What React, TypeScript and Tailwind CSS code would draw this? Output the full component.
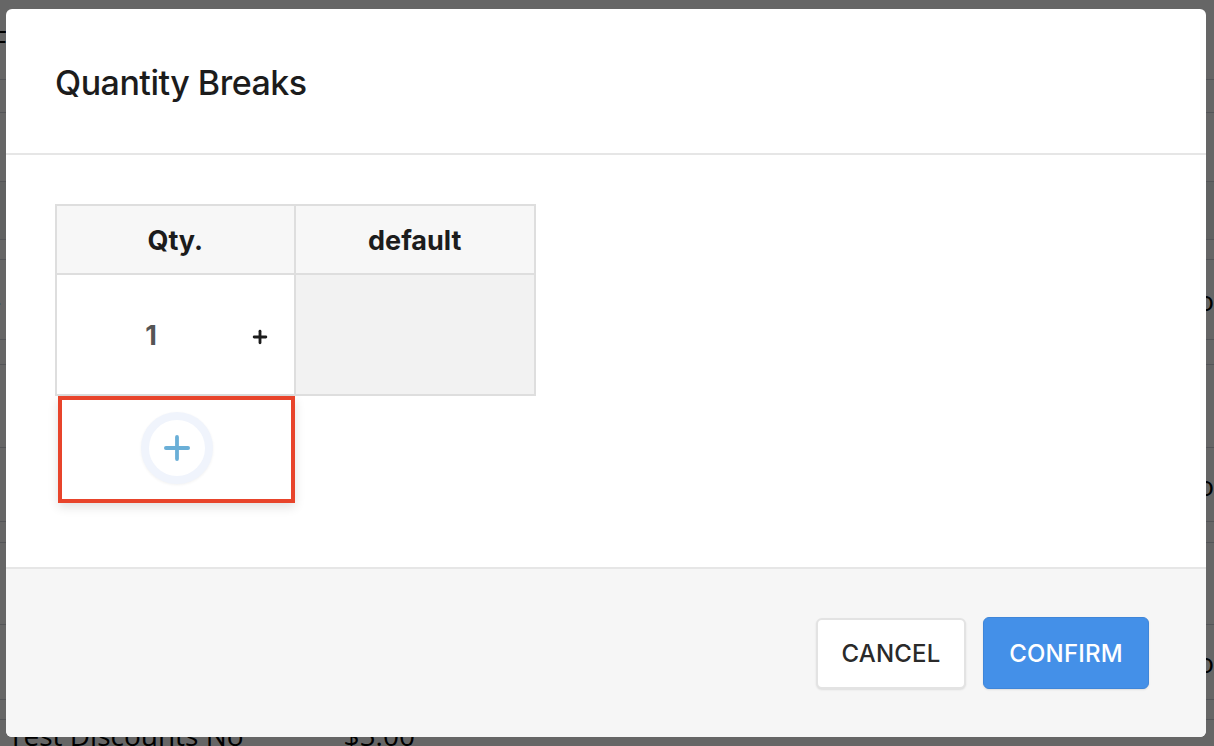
import { Plus } from 'lucide-react';

const bgRows = [
  { h: 'h-[80px]', left: 'F', right: '' },
  { h: 'h-[33px]', left: '', right: '' },
  { h: 'h-[69px]', left: '', right: '' },
  { h: 'h-[58px]', left: 'l', right: '', dark: true },
  { h: 'h-[20px]', left: '', right: '' },
  { h: 'h-[80px]', left: '-', right: 'lo' },
  { h: 'h-[25px]', left: '', right: '' },
  { h: 'h-[83px]', left: '', right: '' },
  { h: 'h-[74px]', left: '', right: 'o' },
  { h: 'h-[21px]', left: '', right: '' },
  { h: 'h-[82px]', left: '', right: '' },
  { h: 'h-[75px]', left: '', right: 'o' },
  { h: 'h-[20px]', left: '', right: '' },
];

function BackgroundPage() {
  return (
    <div className="flex flex-col bg-white text-black text-[28px] font-['Open_Sans',sans-serif]">
      {bgRows.map((r, i) => (
        <div
          key={i}
          className={`${r.h} flex items-center justify-between border-b border-gray-300 ${r.dark ? 'bg-gray-100' : ''}`}
        >
          <span className="-ml-2">{r.left}</span>
          <span>{r.right}</span>
        </div>
      ))}
      <div className="h-[60px] flex items-start gap-[100px] pl-[8px]">
        <span className="-mt-[6px]">Test Discounts No</span>
        <span className="-mt-[6px]">$5.00</span>
      </div>
    </div>
  );
}

export default function App() {
  return (
    <div className="relative w-[1214px] h-[746px] overflow-hidden font-['Inter',sans-serif]">
      <BackgroundPage />
      <div className="absolute inset-0 bg-black/60" />

      <div className="absolute left-[6px] top-[9px] w-[1200px] h-[728px] bg-white rounded-[6px] flex flex-col overflow-hidden">
        {/* header */}
        <div className="h-[146px] flex items-center px-[49px] border-b-2 border-[#e6e6e6] shrink-0">
          <h2 className="text-[34px] font-medium text-[#1c1c1c] tracking-[-0.5px] mt-[3px]">Quantity Breaks</h2>
        </div>

        {/* body */}
        <div className="flex-1 px-[49px] pt-[49px]">
          <div className="w-[481px]">
            <div className="grid grid-cols-2 border-2 border-[#dedede] bg-[#f7f7f7]">
              <div className="h-[67px] flex items-center justify-center border-r-2 border-[#dedede] text-[27px] font-bold text-[#1c1c1c] pt-[4px]">
                Qty.
              </div>
              <div className="h-[67px] flex items-center justify-center text-[27px] font-bold text-[#1c1c1c] pt-[4px]">
                default
              </div>
            </div>
            <div className="grid grid-cols-2 border-2 border-t-0 border-[#dedede]">
              <div className="h-[119px] flex items-center bg-white border-r-2 border-[#dedede] pt-[4px]">
                <span className="w-[188px] text-center text-[27px] font-bold text-[#555]">1</span>
                <Plus className="w-[20px] h-[20px] text-[#1c1c1c] ml-[5px]" strokeWidth={3.4} />
              </div>
              <div className="h-[119px] bg-[#f2f2f2]" />
            </div>
            <div className="ml-[3px] w-[237px] h-[107px] border-4 border-[#e8442b] bg-white shadow-[0_4px_10px_rgba(0,0,0,0.12)] flex items-center justify-center">
              <button className="w-[72px] h-[72px] rounded-full border-[8px] border-[#f0f4fc] bg-white flex items-center justify-center shadow-[0_1px_3px_rgba(0,0,0,0.06)] -mt-[3px]">
                <Plus className="w-[38px] h-[38px] text-[#6aafd7]" strokeWidth={2.4} />
              </button>
            </div>
          </div>
        </div>

        {/* footer */}
        <div className="h-[170px] shrink-0 bg-[#f6f6f6] border-t-2 border-[#e6e6e6] flex items-center justify-end gap-[17px] pr-[57px]">
          <button className="w-[150px] h-[71px] bg-white border-2 border-[#e3e3e3] rounded-[6px] shadow-[0_1px_2px_rgba(0,0,0,0.1)] text-[24px] font-medium text-[#2a2a2a] tracking-[0.2px] pt-[2px]">
            CANCEL
          </button>
          <button className="w-[166px] h-[72px] bg-[#4490e8] border border-[#3f86d9] rounded-[6px] shadow-[0_1px_2px_rgba(0,0,0,0.1)] text-[24px] font-medium text-white tracking-[0.2px] pt-[2px]">
            CONFIRM
          </button>
        </div>
      </div>
    </div>
  );
}
